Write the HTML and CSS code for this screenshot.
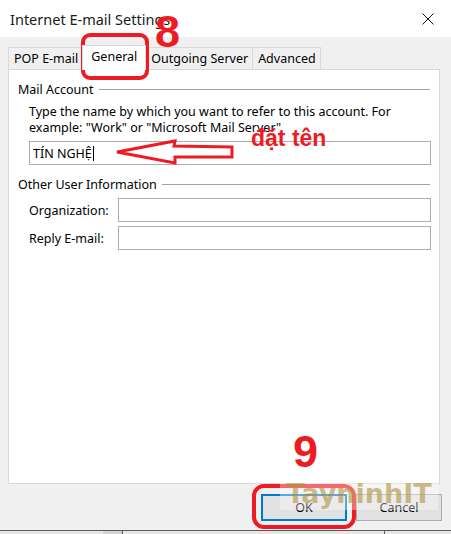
FILE: index.html
```html
<!DOCTYPE html>
<html lang="vi">
<head>
  <meta charset="UTF-8">
  <title>Internet E-mail Settings</title>
  <link rel="stylesheet" href="styles.css">
</head>
<body>
  <div class="dialog">
    <div class="titlebar">
      <span class="title">Internet E-mail Settings</span>
      <svg class="close" width="12" height="12" viewBox="0 0 12 12">
        <path d="M0.5 0.5 L11.5 11.5 M11.5 0.5 L0.5 11.5" stroke="#111" stroke-width="1" fill="none"/>
      </svg>
    </div>

    <div class="body">
      <div class="tabs">
        <div class="tab">POP E-mail</div>
        <div class="tab active">General</div>
        <div class="tab">Outgoing Server</div>
        <div class="tab">Advanced</div>
      </div>

      <div class="panel">
        <div class="group">
          <div class="group-head"><span>Mail Account</span><span class="rule"></span></div>
          <p class="hint">Type the name by which you want to refer to this account. For<br>example: "Work" or "Microsoft Mail Server"</p>
          <div class="field name-field">TÍN NGHỆ<span class="caret"></span></div>
        </div>

        <div class="group other">
          <div class="group-head"><span>Other User Information</span><span class="rule"></span></div>
          <div class="row">
            <label class="row-label">Organization:</label>
            <div class="field"></div>
          </div>
          <div class="row">
            <label class="row-label">Reply E-mail:</label>
            <div class="field"></div>
          </div>
        </div>
      </div>

      <div class="actions">
        <button class="btn default">OK</button>
        <button class="btn">Cancel</button>
      </div>
    </div>

    <div class="taskbar">
      <span class="seg a"></span>
      <span class="seg b"></span>
      <span class="seg c"></span>
    </div>

    <!-- annotations drawn over the screenshot -->
    <div class="ring ring-tab"></div>
    <div class="step step-8">8</div>
    <div class="step step-9">9</div>
    <div class="note">đặt tên</div>
    <svg class="arrow" width="130" height="34" viewBox="0 0 130 34">
      <path d="M7 17 L65 6 L64 11 L122 12 L122 22 L65 22 L65 28 Z" fill="none" stroke="#ed1c24" stroke-width="3" stroke-linejoin="miter"/>
    </svg>
    <div class="ring ring-ok"></div>
    <div class="watermark">TayninhIT</div>
  </div>
</body>
</html>
```

FILE: styles.css
```css
* {
  box-sizing: border-box;
}

body {
  margin: 0;
  font-family: 'Noto Sans', sans-serif;
  color: #000;
  background: #f0f0f0;
}

.dialog {
  position: relative;
  width: 451px;
  height: 534px;
  overflow: hidden;
}

.titlebar {
  height: 37px;
  background: #fff;
  display: flex;
  align-items: center;
  justify-content: space-between;
  padding: 0 17px 0 10px;
}

.title {
  font-size: 14.5px;
  color: #1a1a1a;
}

.body {
  background: #f0f0f0;
  padding-top: 8px;
}

.tabs {
  display: flex;
  align-items: flex-end;
  height: 24px;
  padding-left: 8px;
  font-size: 12.5px;
}

.tab {
  height: 22px;
  padding: 0 4px 0 5px;
  border: 1px solid #d9d9d9;
  border-bottom: none;
  margin-right: -1px;
  display: flex;
  align-items: center;
  background: #f0f0f0;
}

.tab.active {
  height: 25px;
  margin-bottom: -1px;
  background: #fff;
  position: relative;
  z-index: 1;
  padding: 0 8px 3px;
}

.panel {
  margin: 0 11px 0 8px;
  height: 415px;
  background: #fff;
  border: 1px solid #d9d9d9;
  padding: 11px 8px 0 9px;
  font-size: 12.5px;
}

.group-head {
  display: flex;
  align-items: center;
  gap: 5px;
  height: 16px;
}

.rule {
  flex: 1;
  height: 1px;
  background: #a0a0a0;
  margin-right: 1px;
}

.hint {
  margin: 7px 0 0 11px;
  line-height: 16px;
}

.field {
  height: 24px;
  border: 1px solid #adadad;
  background: #fff;
  flex: 1;
}

.name-field {
  margin: 5px 0 0 11px;
  padding-left: 3px;
  display: flex;
  align-items: center;
}

.caret {
  width: 1px;
  height: 15px;
  background: #000;
  margin-left: 1px;
}

.other {
  margin-top: 11px;
}

.other .group-head {
  margin-bottom: 6px;
}

.row {
  display: flex;
  align-items: center;
  margin-left: 11px;
  margin-bottom: 4px;
}

.row-label {
  width: 89px;
}

.actions {
  display: flex;
  justify-content: flex-end;
  gap: 9px;
  padding: 10px 9px 9px 0;
}

.btn {
  width: 86px;
  height: 27px;
  font-family: 'Noto Sans', sans-serif;
  font-size: 12.5px;
  background: #e1e1e1;
  border: 1px solid #adadad;
  padding: 0;
  color: #000;
}

.btn.default {
  border: 2px solid #0078d7;
}

.taskbar {
  height: 4px;
  border-top: 1px solid #5a5a5a;
  background: #e6e6e6;
  display: flex;
}

.seg.a {
  width: 103px;
}

.seg.b {
  width: 20px;
  background: #d2d2d2;
  border-right: 1px solid #5a5a5a;
}

.seg.c {
  width: 262px;
  border-right: 1px solid #5a5a5a;
}

/* annotations */
.ring {
  position: absolute;
  border: 4px solid #ed1c24;
}

.ring-tab {
  left: 81px;
  top: 33px;
  width: 68px;
  height: 47px;
  border-radius: 9px;
}

.ring-ok {
  left: 252px;
  top: 484px;
  width: 104px;
  height: 45px;
  border-radius: 12px;
}

.step {
  position: absolute;
  font-family: 'Liberation Sans', sans-serif;
  font-weight: bold;
  font-size: 45px;
  line-height: 1;
  color: #ed1c24;
}

.step-8 {
  left: 155px;
  top: 9px;
}

.step-9 {
  left: 293px;
  top: 429px;
}

.note {
  position: absolute;
  left: 251px;
  top: 127px;
  font-family: 'Liberation Sans', sans-serif;
  font-weight: bold;
  font-size: 23px;
  line-height: 1;
  color: #ed1c24;
}

.arrow {
  position: absolute;
  left: 110px;
  top: 135px;
}

.watermark {
  position: absolute;
  left: 280px;
  top: 478px;
  width: 158px;
  height: 32px;
  background: rgba(255, 255, 255, 0.35);
  font-family: 'DejaVu Sans', sans-serif;
  font-weight: bold;
  font-size: 27px;
  line-height: 32px;
  text-align: center;
  color: rgba(175, 145, 60, 0.6);
}
```
